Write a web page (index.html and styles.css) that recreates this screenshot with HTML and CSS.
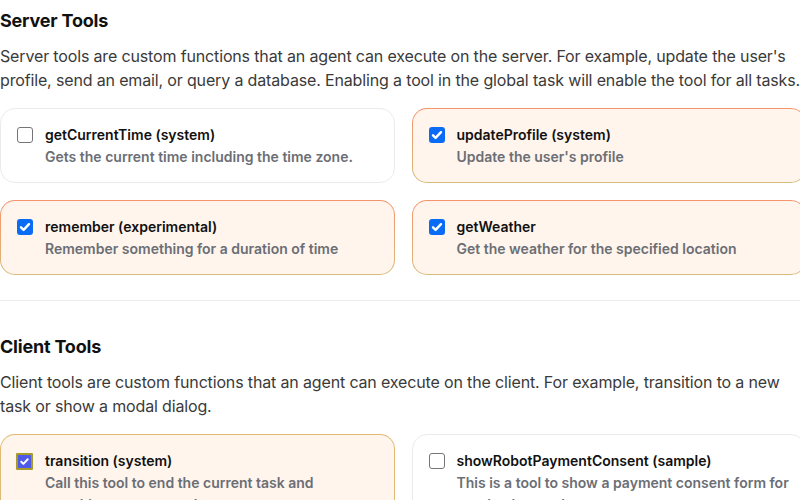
FILE: index.html
```html
<!DOCTYPE html>
<html lang="en">
<head>
  <meta charset="UTF-8" />
  <title>Tools</title>
  <link rel="stylesheet" href="styles.css">
</head>
<body>
  <div class="tools-page">
    <section class="tool-section">
      <h2>Server Tools</h2>
      <p class="intro">Server tools are custom functions that an agent can execute on the server. For example, update the user's profile, send an email, or query a database. Enabling a tool in the global task will enable the tool for all tasks.</p>
      <div class="tool-grid">
        <label class="tool-card">
          <span class="check"></span>
          <span class="tool-text">
            <span class="tool-name">getCurrentTime (system)</span>
            <span class="tool-desc">Gets the current time including the time zone.</span>
          </span>
        </label>
        <label class="tool-card on">
          <span class="check"><svg viewBox="0 0 16 16"><path d="M4 8.3l2.6 2.6L12 5.2"/></svg></span>
          <span class="tool-text">
            <span class="tool-name">updateProfile (system)</span>
            <span class="tool-desc">Update the user's profile</span>
          </span>
        </label>
        <label class="tool-card on">
          <span class="check"><svg viewBox="0 0 16 16"><path d="M4 8.3l2.6 2.6L12 5.2"/></svg></span>
          <span class="tool-text">
            <span class="tool-name">remember (experimental)</span>
            <span class="tool-desc">Remember something for a duration of time</span>
          </span>
        </label>
        <label class="tool-card on">
          <span class="check"><svg viewBox="0 0 16 16"><path d="M4 8.3l2.6 2.6L12 5.2"/></svg></span>
          <span class="tool-text">
            <span class="tool-name">getWeather</span>
            <span class="tool-desc">Get the weather for the specified location</span>
          </span>
        </label>
      </div>
    </section>

    <hr class="divider">

    <section class="tool-section">
      <h2>Client Tools</h2>
      <p class="intro">Client tools are custom functions that an agent can execute on the client. For example, transition to a new task or show a modal dialog.</p>
      <div class="tool-grid">
        <label class="tool-card on gold">
          <span class="check focus"><svg viewBox="0 0 16 16"><path d="M4 8.3l2.6 2.6L12 5.2"/></svg></span>
          <span class="tool-text">
            <span class="tool-name">transition (system)</span>
            <span class="tool-desc">Call this tool to end the current task and transition to a new task</span>
          </span>
        </label>
        <label class="tool-card">
          <span class="check"></span>
          <span class="tool-text">
            <span class="tool-name">showRobotPaymentConsent (sample)</span>
            <span class="tool-desc">This is a tool to show a payment consent form for purchasing a robot</span>
          </span>
        </label>
      </div>
    </section>
  </div>
</body>
</html>
```

FILE: styles.css
```css
body {
  margin: 0;
  background: #fff;
  font-family: Inter, "Noto Sans", sans-serif;
  color: #111;
  overflow: hidden;
}

.tools-page {
  width: 806px;
}

.tool-section h2 {
  margin: 0;
  padding-top: 9px;
  font-size: 18px;
  font-weight: 700;
  line-height: 24px;
  letter-spacing: -0.2px;
}

.intro {
  margin: 11px 0 16px;
  font-size: 16px;
  line-height: 24px;
  letter-spacing: -0.15px;
  color: #3a3a3a;
}

.tool-grid {
  display: grid;
  grid-template-columns: 1fr 1fr;
  gap: 17px 17px;
}

.tool-card {
  display: flex;
  gap: 12px;
  padding: 16px 16px 14px;
  border: 1px solid #ebebeb;
  border-radius: 15px;
  background: #fff;
}

.tool-card.on {
  border-color: transparent;
  background:
    linear-gradient(#fff5ec, #fff5ec) padding-box,
    linear-gradient(to bottom, #f5946c, #d8bc7a) border-box;
}

.tool-card.gold {
  background:
    linear-gradient(#fff5ec, #fff5ec) padding-box,
    linear-gradient(to bottom, #e3b86f, #d9bd7d) border-box;
}

.check {
  flex: none;
  width: 16px;
  height: 16px;
  margin-top: 2px;
  box-sizing: border-box;
  border: 1.5px solid #757575;
  border-radius: 3px;
  background: #fff;
}

.on .check {
  border: none;
  background: #0a6cf5;
}

.check svg {
  display: block;
  width: 16px;
  height: 16px;
  fill: none;
  stroke: #fff;
  stroke-width: 2.4;
  stroke-linecap: round;
  stroke-linejoin: round;
}

.on .check.focus {
  width: 17px;
  height: 17px;
  margin-left: -1px;
  border: 2px solid #a59a2a;
  border-radius: 1px;
  background: #4f5be8;
}

.on .check.focus svg {
  width: 13px;
  height: 13px;
}

.tool-text {
  display: flex;
  flex-direction: column;
  gap: 1px;
}

.tool-name {
  font-size: 14px;
  font-weight: 600;
  line-height: 20px;
  color: #111;
}

.tool-desc {
  font-size: 14px;
  font-weight: 600;
  line-height: 22px;
  color: #6b6e75;
}

.divider {
  margin: 25px 0 25px;
  border: 0;
  border-top: 1.5px solid #ececec;
}
```
